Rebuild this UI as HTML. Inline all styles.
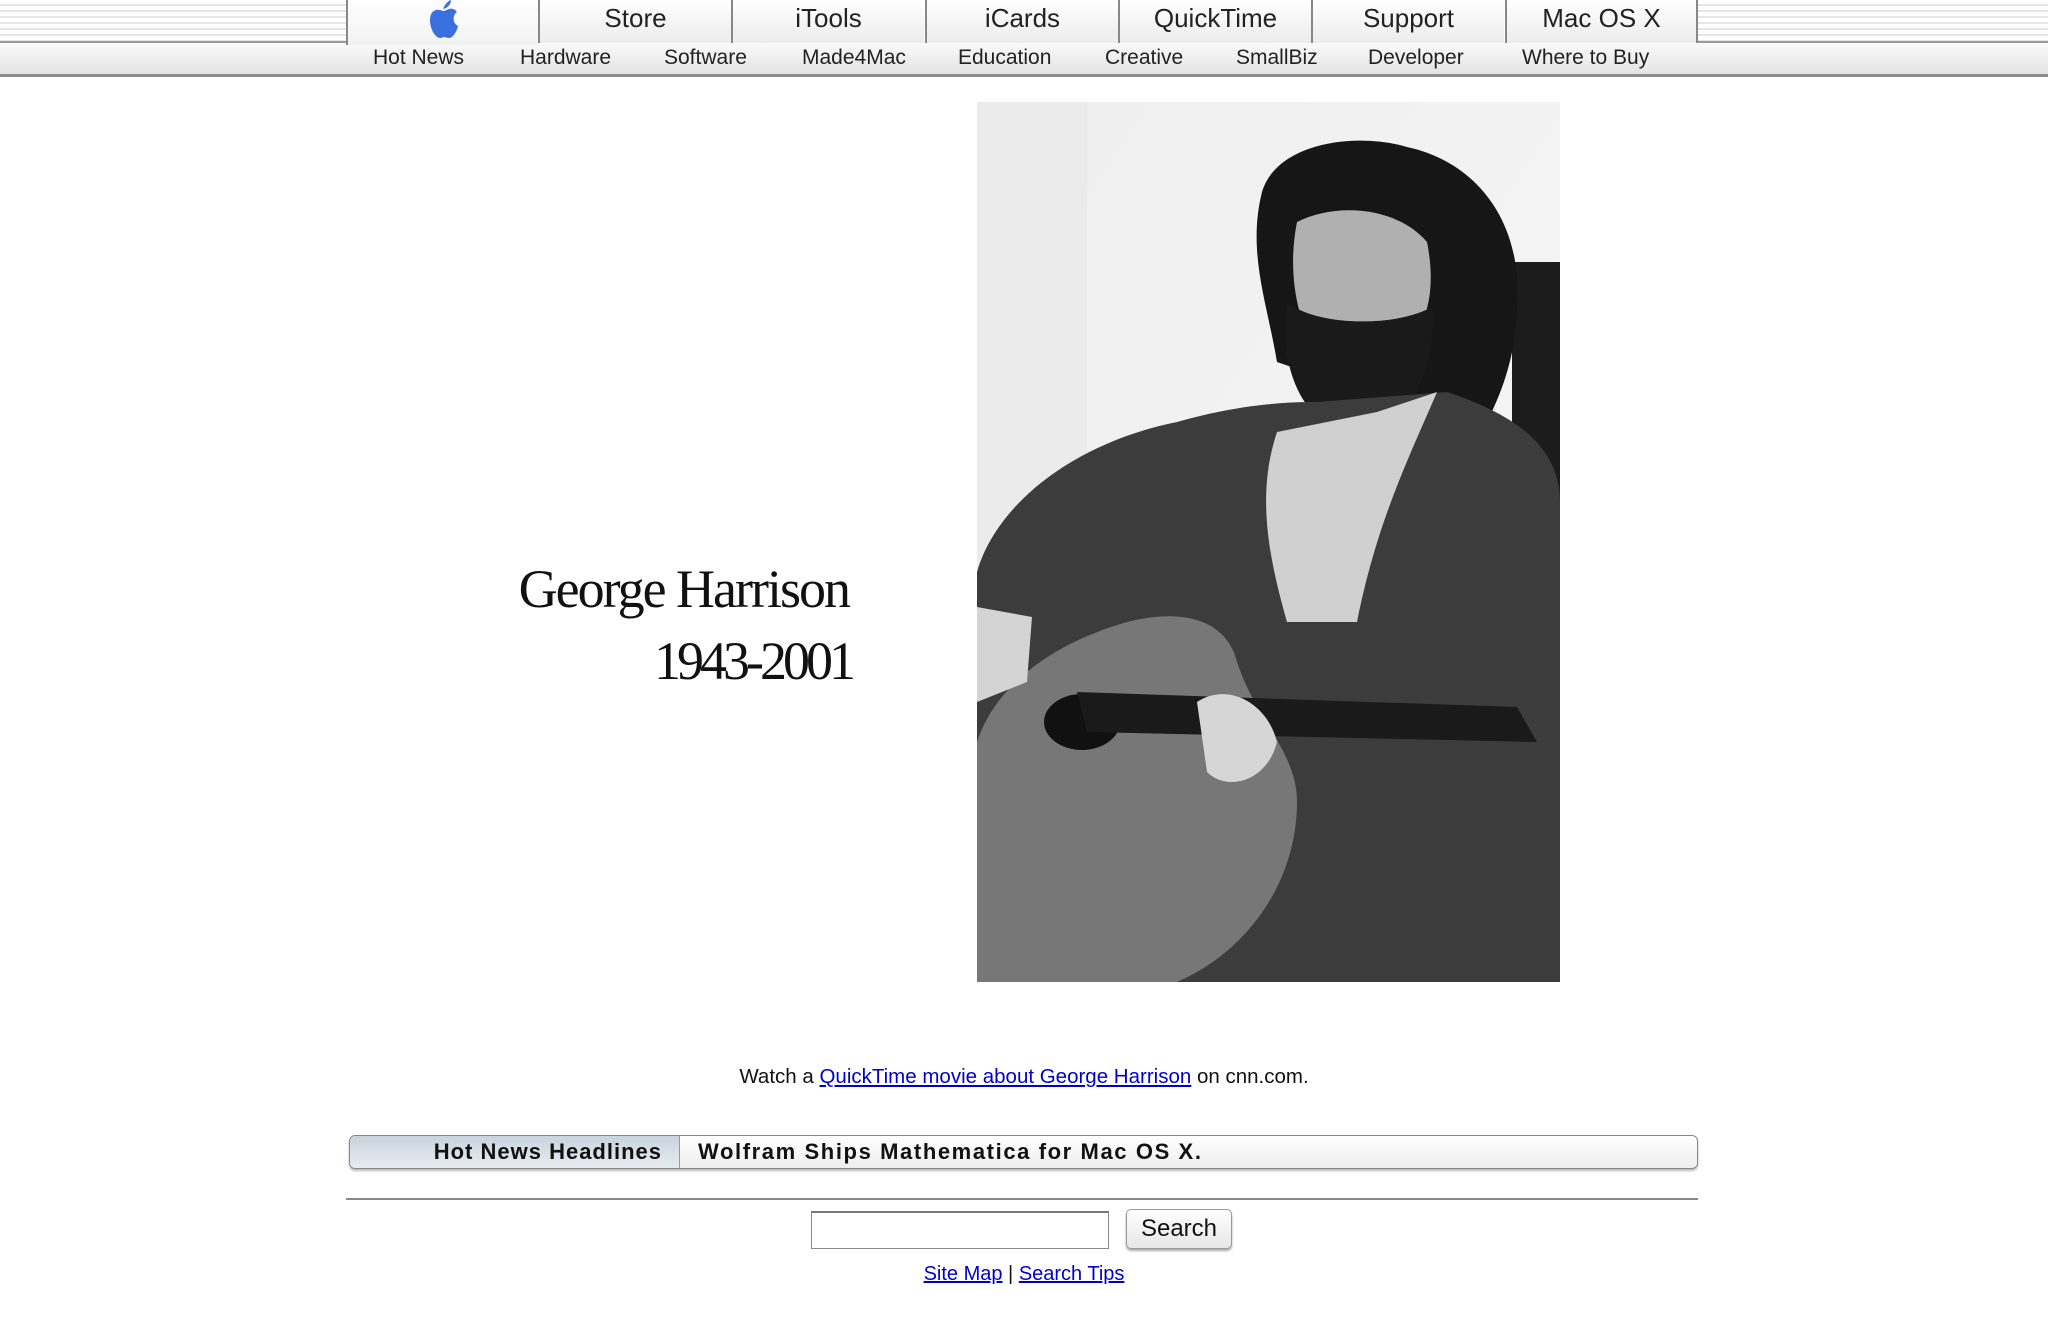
<!DOCTYPE html>
<html><head><meta charset="utf-8"><style>
*{margin:0;padding:0;box-sizing:border-box}
body{width:2048px;height:1327px;background:#fff;position:relative;overflow:hidden;font-family:"Liberation Sans",sans-serif}
.stripes{position:absolute;top:0;height:43px;background:repeating-linear-gradient(#fff 0 4px,#e6e6e6 4px 6px);border-bottom:2px solid #999}
.tab{position:absolute;top:0;height:43px;width:193px;border-left:2px solid #888;background:linear-gradient(#fff,#ececec);text-align:center;font-size:26px;line-height:36px;color:#222}
.sub{position:absolute;top:43px;left:0;width:2048px;height:34px;background:linear-gradient(#fafafa,#e4e4e4);border-bottom:3px solid #8c8c8c}
.sub span{position:absolute;top:3px;font-size:21px;color:#222}
.t{position:absolute;font-family:"Liberation Serif",serif;color:#111;letter-spacing:-2px}
a{color:#00c}
</style></head><body>
<div class="stripes" style="left:0;width:346px"></div>
<div class="stripes" style="left:1698px;width:350px"></div>
<div class="tab" style="left:346px;width:192px;border-left:2px solid #888;background:linear-gradient(#fff,#f2f2f2);height:45px;z-index:2">
<svg width="36" height="40" viewBox="0 0 36 40"><path d="M18 9 C20 4 23 1 26 0 C26 4 23 8 18 9Z" fill="#3a6fe0"/><path d="M18 11 C12 8 5 10 5 20 C5 30 11 38 15 38 C17 38 18 37 19 37 C21 37 22 38 24 38 C28 38 32 31 33 26 C29 24 28 20 29 16 C30 14 31 12 32 12 C30 9 27 8 24 9 C21 10 20 11 18 11Z" fill="#3a6fe0"/></svg></div>
<div class="tab" style="left:538px">Store</div>
<div class="tab" style="left:731px">iTools</div>
<div class="tab" style="left:925px">iCards</div>
<div class="tab" style="left:1118px">QuickTime</div>
<div class="tab" style="left:1311px">Support</div>
<div class="tab" style="left:1505px;border-right:2px solid #888">Mac OS X</div>
<div class="sub">
<span style="left:373px">Hot News</span><span style="left:520px">Hardware</span><span style="left:664px">Software</span><span style="left:802px">Made4Mac</span><span style="left:958px">Education</span><span style="left:1105px">Creative</span><span style="left:1236px">SmallBiz</span><span style="left:1368px">Developer</span><span style="left:1522px">Where to Buy</span>
</div>
<div class="t" style="right:1199px;top:558px;font-size:54px">George Harrison</div>
<div class="t" style="right:1196px;top:630px;font-size:54px;letter-spacing:-4px">1943-2001</div>
<svg style="position:absolute;left:977px;top:102px" width="583" height="880" viewBox="0 0 583 880">
<defs><linearGradient id="bg" x1="0" y1="0" x2="1" y2="1"><stop offset="0" stop-color="#eeeeee"/><stop offset="1" stop-color="#f7f7f7"/></linearGradient></defs>
<rect width="583" height="880" fill="url(#bg)"/>
<rect x="0" y="0" width="110" height="880" fill="#ebebeb"/>
<rect x="535" y="160" width="48" height="320" fill="#1c1c1c"/>
<path d="M285 90 C300 40 380 30 430 45 C500 60 545 120 540 200 C540 260 520 300 505 330 L300 260 C290 200 270 150 285 90Z" fill="#161616"/>
<path d="M320 120 C360 100 420 105 450 140 C460 190 450 230 420 250 L340 250 C320 220 310 170 320 120Z" fill="#b0b0b0"/>
<path d="M310 200 C340 225 420 225 455 205 C460 270 430 330 380 330 C330 330 300 270 310 200Z" fill="#1a1a1a"/>
<path d="M0 470 C20 400 100 340 200 320 C270 300 320 300 340 300 L470 290 C530 310 583 340 583 400 L583 880 L0 880Z" fill="#3c3c3c"/>
<path d="M300 330 L400 310 L460 290 C430 360 400 420 380 520 L310 520 C290 450 280 390 300 330Z" fill="#d0d0d0"/>
<path d="M0 640 C20 580 80 540 150 520 C210 505 250 520 260 560 C280 620 320 650 320 700 C320 780 270 850 200 880 L0 880Z" fill="#777"/>
<ellipse cx="105" cy="620" rx="38" ry="28" fill="#111"/>
<path d="M100 590 L540 605 L560 640 L110 630Z" fill="#1a1a1a"/>
<path d="M0 505 L55 515 L50 580 L0 600Z" fill="#d4d4d4"/>
<path d="M220 600 C250 580 290 600 300 640 C290 680 250 690 230 670Z" fill="#d6d6d6"/>
</svg>
<div style="position:absolute;top:1065px;left:0;width:2048px;text-align:center;font-size:20.5px;color:#111">Watch a <a href="#">QuickTime movie about George Harrison</a> on cnn.com.</div>
<div style="position:absolute;left:349px;top:1135px;width:1349px;height:34px;border:1px solid #888;border-radius:6px;background:linear-gradient(#fff,#eee);box-shadow:0 2px 2px #bbb;overflow:hidden">
<div style="position:absolute;left:0;top:0;width:330px;height:34px;background:linear-gradient(#c9d3de,#e9edf1);border-right:1px solid #999;font-weight:bold;font-size:22px;letter-spacing:1px;line-height:32px;text-align:right;padding-right:17px;color:#111">Hot News Headlines</div>
<div style="position:absolute;left:348px;top:0;font-weight:bold;font-size:22px;letter-spacing:1.6px;line-height:32px;color:#111">Wolfram Ships Mathematica for Mac OS X.</div>
</div>
<div style="position:absolute;left:346px;top:1198px;width:1352px;height:2px;background:#888"></div>
<div style="position:absolute;left:811px;top:1211px;width:298px;height:38px;border:1px solid #888;border-top:2px solid #777;background:#fff"></div>
<div style="position:absolute;left:1126px;top:1209px;width:106px;height:40px;border:1px solid #999;border-radius:5px;background:linear-gradient(#fff,#e6e6e6);box-shadow:0 2px 2px #aaa;font-size:24px;text-align:center;line-height:38px;color:#111">Search</div>
<div style="position:absolute;top:1263px;left:0;width:2048px;text-align:center;font-size:20px;color:#111"><a href="#">Site Map</a> | <a href="#">Search Tips</a></div>
</body></html>
